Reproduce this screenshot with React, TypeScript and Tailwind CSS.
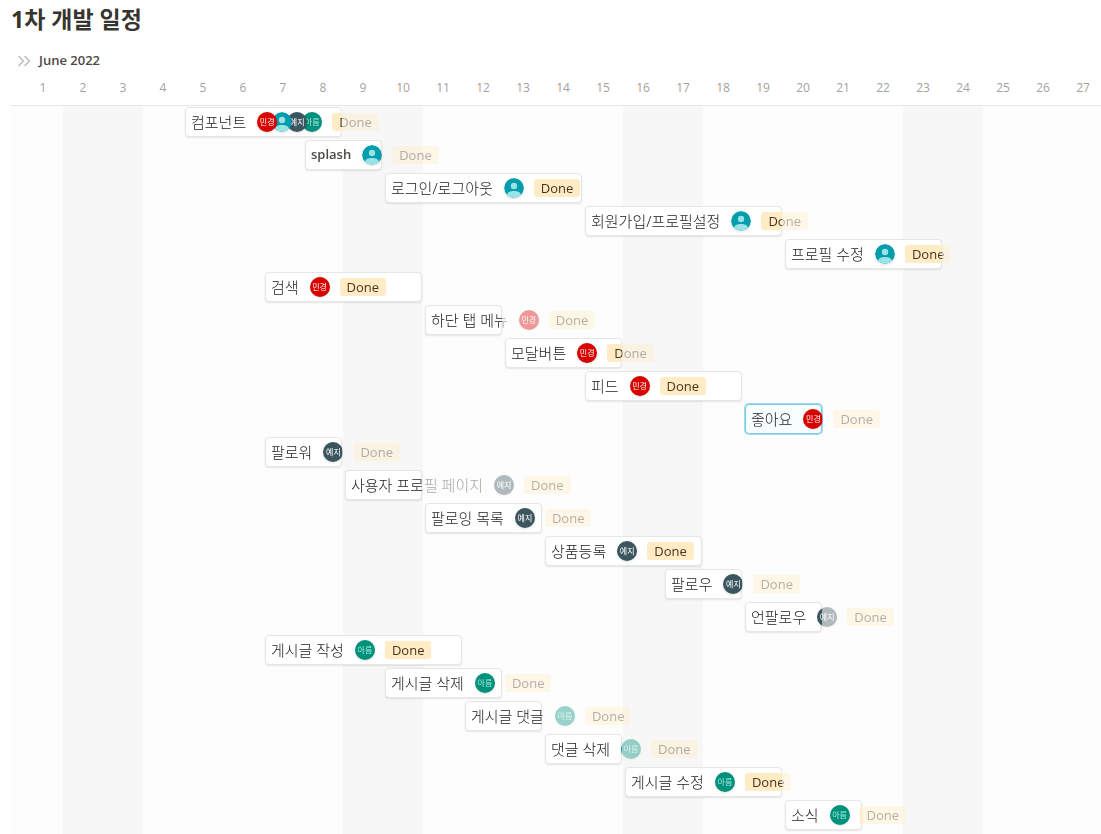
import React from 'react';
import { clsx } from 'clsx';

type Person = 'min' | 'user' | 'ye' | 'ah';
type Task = { title: string; start: number; days: number; people: Person[]; latin?: boolean; selected?: boolean };

const DAY = 40;
const DAYS = Array.from({ length: 27 }, (_, i) => i + 1);
const WEEKENDS = [2, 9, 16, 23];

const TASKS: Task[] = [
  { title: '컴포넌트', start: 5, days: 4, people: ['min', 'user', 'ye', 'ah'] },
  { title: 'splash', start: 8, days: 2, people: ['user'], latin: true },
  { title: '로그인/로그아웃', start: 10, days: 5, people: ['user'] },
  { title: '회원가입/프로필설정', start: 15, days: 5, people: ['user'] },
  { title: '프로필 수정', start: 20, days: 4, people: ['user'] },
  { title: '검색', start: 7, days: 4, people: ['min'] },
  { title: '하단 탭 메뉴', start: 11, days: 2, people: ['min'] },
  { title: '모달버튼', start: 13, days: 3, people: ['min'] },
  { title: '피드', start: 15, days: 4, people: ['min'] },
  { title: '좋아요', start: 19, days: 2, people: ['min'], selected: true },
  { title: '팔로워', start: 7, days: 2, people: ['ye'] },
  { title: '사용자 프로필 페이지', start: 9, days: 2, people: ['ye'] },
  { title: '팔로잉 목록', start: 11, days: 3, people: ['ye'] },
  { title: '상품등록', start: 14, days: 4, people: ['ye'] },
  { title: '팔로우', start: 17, days: 2, people: ['ye'] },
  { title: '언팔로우', start: 19, days: 2, people: ['ye'] },
  { title: '게시글 작성', start: 7, days: 5, people: ['ah'] },
  { title: '게시글 삭제', start: 10, days: 3, people: ['ah'] },
  { title: '게시글 댓글', start: 12, days: 2, people: ['ah'] },
  { title: '댓글 삭제', start: 14, days: 2, people: ['ah'] },
  { title: '게시글 수정', start: 16, days: 4, people: ['ah'] },
  { title: '소식', start: 20, days: 2, people: ['ah'] },
];

const INITIALS = {
  min: { name: '민경', color: 'bg-[#d90000] text-white' },
  ye: { name: '예지', color: 'bg-[#3c5660] text-white' },
  ah: { name: '아름', color: 'bg-[#00917c] text-[#a6ebdc]' },
};

function Avatar({ person }: { person: Person }) {
  const shape = 'size-5 rounded-full shadow-sm';
  if (person === 'user') {
    return (
      <svg viewBox="0 0 20 20" className={shape} aria-hidden="true">
        <defs>
          <clipPath id="avatar-disc"><circle cx="10" cy="10" r="10" /></clipPath>
        </defs>
        <circle cx="10" cy="10" r="10" fill="#009dac" />
        <g clipPath="url(#avatar-disc)" fill="#99e3e6">
          <circle cx="10" cy="8" r="3.2" />
          <path d="M3.2 20v-3.2C3.2 14.3 6 13 10 13s6.800 1.300 6.800 3.800V20z" />
        </g>
      </svg>
    );
  }
  const { name, color } = INITIALS[person];
  return (
    <span className={clsx(shape, color, 'flex items-center justify-center overflow-hidden whitespace-nowrap text-[8px] leading-none')}>
      {name}
    </span>
  );
}

function TaskBar({ task, row }: { task: Task; row: number }) {
  const width = task.days * DAY - 3;
  const fade = `linear-gradient(to right, #000 ${width}px, rgba(0,0,0,0.4) ${width}px)`;
  return (
    <div className="grid grid-cols-[minmax(0,1fr)] pl-0.5 pt-px pr-px" style={{ gridRow: row, gridColumn: `${task.start + 1} / span ${task.days}` }}>
      <div
        className={clsx(
          'h-[30px] rounded-[4px] border [grid-area:1/1]',
          task.selected
            ? 'border-[#7fcbe0] bg-[#f8fdff] shadow-[0_0_0_1px_#9cdcee]'
            : 'border-[#e6e6e6] bg-white shadow-[0_1px_2px_rgba(0,0,0,0.10)]',
        )}
      />
      <a
        href="#"
        className="z-10 flex h-[30px] w-max items-center pl-1.5 [grid-area:1/1]"
        style={{ maskImage: fade, WebkitMaskImage: fade }}
      >
        <span
          className={clsx(
            'whitespace-nowrap',
            task.latin ? "font-['Open_Sans',sans-serif] text-[13px] font-semibold text-[#4b4945]" : 'text-[15px] font-light text-[#1c1b19]',
          )}
        >
          {task.title}
        </span>
        <span className="ml-[11px] flex">
          {task.people.map((person, i) => (
            <span key={person} className={clsx('relative flex size-5 shrink-0', i > 0 && '-ml-[5px]')} style={{ zIndex: task.people.length - i }}>
              <Avatar person={person} />
            </span>
          ))}
        </span>
        <span className="ml-2.5 h-[18px] rounded-[3px] bg-[#ffecc4] px-[7px] font-['Open_Sans',sans-serif] text-[13px] leading-[18px] text-[#4a3420]">
          Done
        </span>
      </a>
    </div>
  );
}

export default function App() {
  return (
    <main className="flex min-h-screen flex-col overflow-hidden bg-white pl-[11px] font-['Noto_Sans','Noto_Sans_CJK_KR',sans-serif] text-[#37352f]">
      <h1 className="h-[38px] text-[23px] font-bold leading-[38px]">1차 개발 일정</h1>
      <div className="mt-3 flex h-[22px] items-center gap-2 pl-1.5">
        <svg viewBox="0 0 14 14" className="h-3.5 w-3.5" fill="none" stroke="#b5b5b3" strokeWidth="1.2" aria-hidden="true">
          <path d="M1.500 2l5 5-5 5M7.500 2l5 5-5 5" />
        </svg>
        <h2 className="font-['Open_Sans',sans-serif] text-[13px] font-semibold text-[#4b4945]">June 2022</h2>
      </div>
      <div className="grid h-[34px] shrink-0 grid-cols-[12px_repeat(27,40px)] items-center border-b border-[#e6e6e5] pb-0.5 text-center font-['Open_Sans',sans-serif] text-[12px] text-[#a3a29f]">
        <span />
        {DAYS.map((day) => (
          <span key={day}>{day}</span>
        ))}
      </div>
      <div className="grid flex-1 grid-cols-[12px_repeat(27,40px)] grid-rows-[repeat(22,33px)_1fr] bg-[#fdfdfd]">
        {WEEKENDS.map((day) => (
          <div key={day} className="row-span-full bg-[#f7f7f7]" style={{ gridColumn: `${day + 1} / span 2` }} />
        ))}
        {TASKS.map((task, i) => (
          <TaskBar key={task.title} task={task} row={i + 1} />
        ))}
      </div>
    </main>
  );
}
